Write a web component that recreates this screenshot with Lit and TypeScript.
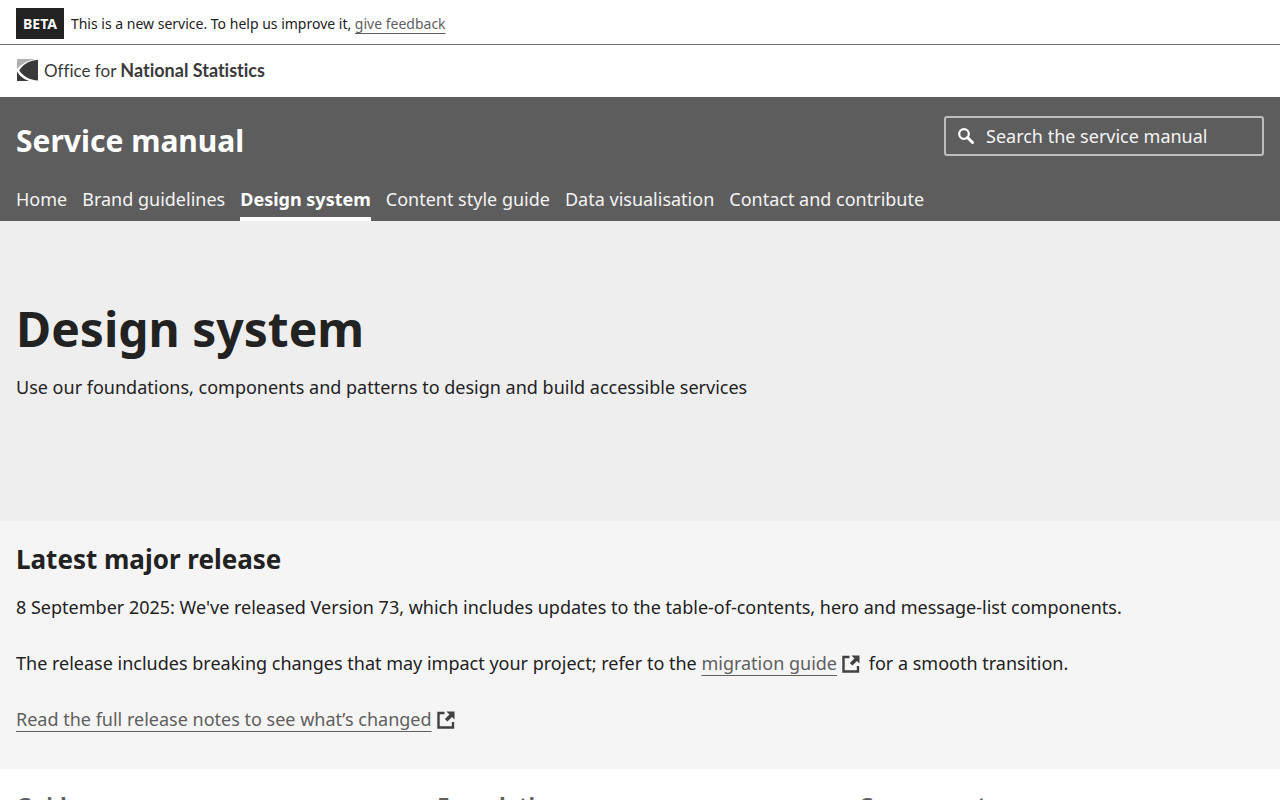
import { LitElement, html, css, svg } from "lit";
import { customElement } from "lit/decorators.js";

const NAV = [
  "Home",
  "Brand guidelines",
  "Design system",
  "Content style guide",
  "Data visualisation",
  "Contact and contribute",
];

const CARDS = ["Guidance", "Foundations", "Components"];

const externalIcon = html`<svg class="ext" viewBox="0 0 18 18" aria-hidden="true">
  ${svg`<path d="M7.500 2H1.500v14.500h14.500v-5.500" fill="none" stroke="currentColor" stroke-width="2.400"/>
  <path d="M9.500 .5H17.500v8l-2.500-2.500-4.600 4.600-2.500-2.500 4.600-4.600z" fill="currentColor"/>`}
</svg>`;

@customElement("app-root")
export class AppRoot extends LitElement {
  static styles = css`
    :host {
      display: block;
      font-family: "Noto Sans", "Open Sans", sans-serif;
      font-size: 18px;
      line-height: 32px;
      color: #222;
      background: #fff;
    }
    * {
      box-sizing: border-box;
    }
    h1, h2, p, ul {
      margin: 0;
      padding: 0;
    }
    .wrap {
      padding: 0 16px;
    }
    .link {
      color: #5f5f5f;
      text-decoration: underline;
      text-decoration-thickness: 1px;
      text-underline-offset: 5px;
      text-decoration-skip-ink: none;
    }
    .phase {
      display: flex;
      align-items: center;
      gap: 7px;
      padding-top: 8px;
      padding-bottom: 5px;
      border-bottom: 1px solid #707070;
      font-size: 14px;
      line-height: 31px;
    }
    .phase .link {
      text-underline-offset: 4px;
    }
    .badge {
      padding: 0 7px;
      background: #222;
      color: #fff;
      font-weight: 700;
    }
    .brand {
      display: flex;
      height: 52px;
      align-items: center;
    }
    .logo {
      display: flex;
      align-items: center;
      gap: 6px;
      color: #3a3a3a;
      font-family: Lato, sans-serif;
      font-size: 17px;
      line-height: 24px;
      font-variant-ligatures: none;
      text-decoration: none;
      padding-bottom: 2px;
    }
    .logo b {
      font-size: 18px;
    }
    .mark {
      width: 22px;
      height: 22px;
    }
    .header {
      background: #5d5d5d;
      color: #fff;
    }
    .top {
      display: flex;
      justify-content: space-between;
      align-items: flex-start;
      padding-top: 19px;
    }
    .title {
      font-size: 30px;
      line-height: 50px;
      font-weight: 700;
    }
    .search {
      display: flex;
      align-items: center;
      gap: 12px;
      width: 320px;
      height: 40px;
      padding: 0 12px;
      border: 2px solid #bdbdbd;
      border-radius: 3px;
    }
    .search svg {
      width: 16px;
      height: 16px;
      flex: none;
    }
    .search input {
      flex: 1;
      min-width: 0;
      padding: 0;
      border: 0;
      outline: 0;
      background: transparent;
      color: #fff;
      font: inherit;
    }
    .search input::placeholder {
      color: #f4f4f4;
      opacity: 1;
    }
    .nav {
      display: flex;
      gap: 15px;
      padding-top: 15px;
      list-style: none;
    }
    .nav a {
      display: block;
      height: 40px;
      padding-top: 3px;
      line-height: 30px;
      color: #f4f4f4;
      text-decoration: none;
      border-bottom: 4px solid transparent;
    }
    .nav .active {
      color: #fff;
      font-weight: 700;
      border-color: #fff;
    }
    .hero {
      display: flex;
      flex-direction: column;
      justify-content: center;
      min-height: 300px;
      padding-bottom: 42px;
      background: #eee;
    }
    .hero h1 {
      font-size: 48px;
      line-height: 64px;
      margin-bottom: 10px;
    }
    .release {
      padding-top: 19px;
      padding-bottom: 34px;
      background: #f5f5f5;
    }
    .release h2 {
      font-size: 26px;
      line-height: 38px;
      margin-bottom: 13px;
    }
    .release p + p {
      margin-top: 24px;
    }
    .ext {
      width: 18px;
      height: 18px;
      margin: 0 4px 0 5px;
      vertical-align: -3px;
      color: #414042;
    }
    .cards {
      display: grid;
      grid-template-columns: repeat(3, 1fr);
      gap: 16px;
      padding-top: 18px;
      padding-bottom: 32px;
    }
    .cards h2 {
      font-size: 22px;
      line-height: 34px;
    }
  `;

  render() {
    return html`
      <div class="phase wrap">
        <strong class="badge">BETA</strong>
        <span>This is a new service. To help us improve it, <a class="link" href="#">give feedback</a></span>
      </div>
      <div class="brand wrap">
        <a class="logo" href="#">
          <svg class="mark" viewBox="0 0 22 22" aria-hidden="true">
            <path d="M1 0h18Q8 2.500 1 10z" fill="#b1b1b1" />
            <path d="M22.500 .8v20.700C14 21.500 7 17 3.200 11.500 7 5 14 1.500 22.500 .8z" fill="#3a3a3a" />
            <path d="M1 12.500C4 17.500 8 20.500 13 22H1z" fill="#3a3a3a" />
          </svg>
          <span>Office for <b>National Statistics</b></span>
        </a>
      </div>
      <header class="header wrap">
        <div class="top">
          <div class="title">Service manual</div>
          <label class="search">
            <svg viewBox="0 0 16 16" aria-hidden="true">
              <circle cx="6" cy="6" r="4.800" fill="none" stroke="#fff" stroke-width="2.200" />
              <path d="M9.500 9.500l5 5" stroke="#fff" stroke-width="3" stroke-linecap="round" />
            </svg>
            <input type="search" aria-label="Search the service manual" placeholder="Search the service manual" />
          </label>
        </div>
        <nav aria-label="Main">
          <ul class="nav">
            ${NAV.map(
              (n) => html`<li><a href="#" class=${n === "Design system" ? "active" : ""}>${n}</a></li>`
            )}
          </ul>
        </nav>
      </header>
      <main>
        <section class="hero wrap">
          <h1>Design system</h1>
          <p>Use our foundations, components and patterns to design and build accessible services</p>
        </section>
        <section class="release wrap">
          <h2>Latest major release</h2>
          <p>8 September 2025: We've released Version 73, which includes updates to the table-of-contents, hero and message-list components.</p>
          <p>The release includes breaking changes that may impact your project; refer to the <a class="link" href="#">migration guide</a>${externalIcon} for a smooth transition.</p>
          <p><a class="link" href="#">Read the full release notes to see what’s changed</a>${externalIcon}</p>
        </section>
        <section class="cards wrap">
          ${CARDS.map((title) => html`<h2><a class="link" href="#">${title}</a></h2>`)}
        </section>
      </main>
    `;
  }
}
